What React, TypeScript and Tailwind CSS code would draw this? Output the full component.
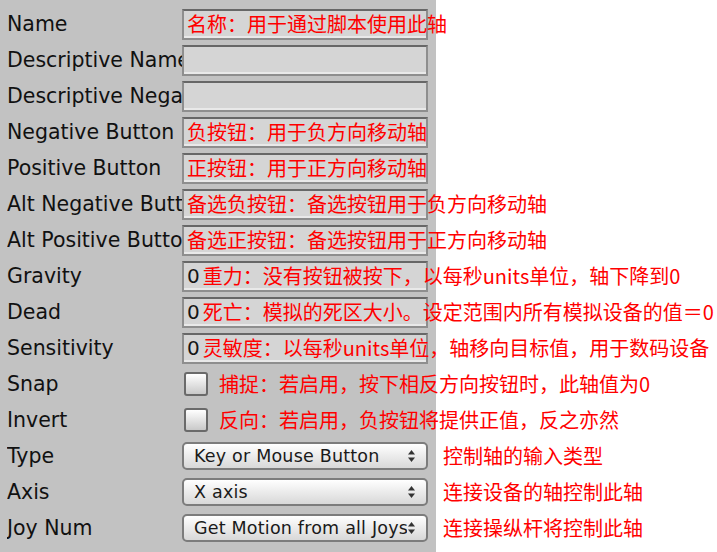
const zh = { fontFamily: '"Noto Sans CJK SC", "Noto Sans", sans-serif' };

const Label = ({ text }: { text: string }) => (
  <div className="w-[175px] shrink-0 ml-[7px] overflow-hidden whitespace-nowrap text-[20.5px] text-[#111]">
    {text}
  </div>
);

const Field = ({ value, note }: { value?: string; note?: string }) => (
  <div className="relative shrink-0 w-[246px] h-[31px] bg-[#d5d5d5] border-2 border-[#8e8e8e] border-t-[#676767] shadow-[inset_0_-2px_0_#e9e9e9] flex items-center pl-[3px] whitespace-nowrap">
    {value && <span className="text-[20px] text-[#151515] mr-[3px]">{value}</span>}
    {note && (
      <span className="text-[20px] text-[#ff0000] leading-none" style={zh}>
        {note}
      </span>
    )}
  </div>
);

const Check = ({ note }: { note: string }) => (
  <div className="flex shrink-0 items-center whitespace-nowrap">
    <div className="ml-[2px] w-[24px] h-[24px] rounded-[3px] border-2 border-[#6a6a6a] bg-gradient-to-b from-white to-[#c9c9c9]" />
    <span className="ml-[11px] text-[20px] text-[#ff0000] leading-none" style={zh}>
      {note}
    </span>
  </div>
);

const Select = ({ value, note }: { value: string; note: string }) => (
  <div className="flex shrink-0 items-center whitespace-nowrap">
    <div className="w-[246px] h-[28px] rounded-[5px] border-2 border-[#7c7c7c] bg-gradient-to-b from-white to-[#d8d8d8] flex items-center pl-[10px] pr-[10px]">
      <span className="flex-1 overflow-hidden text-[17.5px] text-[#1a1a1a] tracking-[0.2px]">{value}</span>
      <svg width="9" height="14" viewBox="0 0 9 14" className="shrink-0">
        <path d="M4.5 1 L8 5.5 H1 Z" fill="#333" />
        <path d="M4.5 13 L8 8.5 H1 Z" fill="#333" />
      </svg>
    </div>
    <span className="ml-[15px] text-[20px] text-[#ff0000] leading-none" style={zh}>
      {note}
    </span>
  </div>
);

const Row = ({ label, children }: { label: string; children: React.ReactNode }) => (
  <div className="h-[36px] flex items-center">
    <Label text={label} />
    {children}
  </div>
);

export default function App() {
  return (
    <div className="w-[717px] h-[552px] flex bg-white overflow-hidden" style={{ fontFamily: '"DejaVu Sans", sans-serif' }}>
      <div className="w-[436px] shrink-0 bg-[#c2c2c2] pt-[6px] flex flex-col">
        <Row label="Name"><Field note="名称：用于通过脚本使用此轴" /></Row>
        <Row label="Descriptive Name"><Field /></Row>
        <Row label="Descriptive Negative Name"><Field /></Row>
        <Row label="Negative Button"><Field note="负按钮：用于负方向移动轴" /></Row>
        <Row label="Positive Button"><Field note="正按钮：用于正方向移动轴" /></Row>
        <Row label="Alt Negative Button"><Field note="备选负按钮：备选按钮用于负方向移动轴" /></Row>
        <Row label="Alt Positive Button"><Field note="备选正按钮：备选按钮用于正方向移动轴" /></Row>
        <Row label="Gravity"><Field value="0" note="重力：没有按钮被按下，以每秒units单位，轴下降到0" /></Row>
        <Row label="Dead"><Field value="0" note="死亡：模拟的死区大小。设定范围内所有模拟设备的值＝0" /></Row>
        <Row label="Sensitivity"><Field value="0" note="灵敏度：以每秒units单位，轴移向目标值，用于数码设备" /></Row>
        <Row label="Snap"><Check note="捕捉：若启用，按下相反方向按钮时，此轴值为0" /></Row>
        <Row label="Invert"><Check note="反向：若启用，负按钮将提供正值，反之亦然" /></Row>
        <Row label="Type"><Select value="Key or Mouse Button" note="控制轴的输入类型" /></Row>
        <Row label="Axis"><Select value="X axis" note="连接设备的轴控制此轴" /></Row>
        <Row label="Joy Num"><Select value="Get Motion from all Joysticks" note="连接操纵杆将控制此轴" /></Row>
      </div>
      <div className="flex-1" />
    </div>
  );
}
